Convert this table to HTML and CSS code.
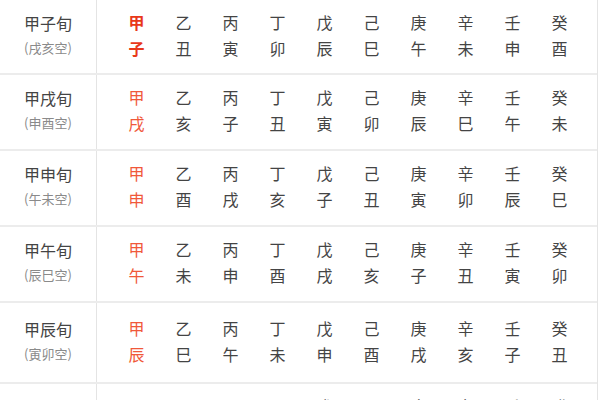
FILE: index.html
```html
<!DOCTYPE html>
<html lang="zh">
<head>
<meta charset="utf-8">
<link rel="stylesheet" href="styles.css">
</head>
<body>
<div class="table">
  <div class="row r1">
    <div class="label"><div class="name">甲子旬</div><div class="kong">(戌亥空)</div></div>
    <div class="cells">
      <div class="col first strong"><span>甲</span><span>子</span></div>
      <div class="col"><span>乙</span><span>丑</span></div>
      <div class="col"><span>丙</span><span>寅</span></div>
      <div class="col"><span>丁</span><span>卯</span></div>
      <div class="col"><span>戊</span><span>辰</span></div>
      <div class="col"><span>己</span><span>巳</span></div>
      <div class="col"><span>庚</span><span>午</span></div>
      <div class="col"><span>辛</span><span>未</span></div>
      <div class="col"><span>壬</span><span>申</span></div>
      <div class="col"><span>癸</span><span>酉</span></div>
    </div>
  </div>
  <div class="row">
    <div class="label"><div class="name">甲戌旬</div><div class="kong">(申酉空)</div></div>
    <div class="cells">
      <div class="col first"><span>甲</span><span>戌</span></div>
      <div class="col"><span>乙</span><span>亥</span></div>
      <div class="col"><span>丙</span><span>子</span></div>
      <div class="col"><span>丁</span><span>丑</span></div>
      <div class="col"><span>戊</span><span>寅</span></div>
      <div class="col"><span>己</span><span>卯</span></div>
      <div class="col"><span>庚</span><span>辰</span></div>
      <div class="col"><span>辛</span><span>巳</span></div>
      <div class="col"><span>壬</span><span>午</span></div>
      <div class="col"><span>癸</span><span>未</span></div>
    </div>
  </div>
  <div class="row">
    <div class="label"><div class="name">甲申旬</div><div class="kong">(午未空)</div></div>
    <div class="cells">
      <div class="col first"><span>甲</span><span>申</span></div>
      <div class="col"><span>乙</span><span>酉</span></div>
      <div class="col"><span>丙</span><span>戌</span></div>
      <div class="col"><span>丁</span><span>亥</span></div>
      <div class="col"><span>戊</span><span>子</span></div>
      <div class="col"><span>己</span><span>丑</span></div>
      <div class="col"><span>庚</span><span>寅</span></div>
      <div class="col"><span>辛</span><span>卯</span></div>
      <div class="col"><span>壬</span><span>辰</span></div>
      <div class="col"><span>癸</span><span>巳</span></div>
    </div>
  </div>
  <div class="row">
    <div class="label"><div class="name">甲午旬</div><div class="kong">(辰巳空)</div></div>
    <div class="cells">
      <div class="col first"><span>甲</span><span>午</span></div>
      <div class="col"><span>乙</span><span>未</span></div>
      <div class="col"><span>丙</span><span>申</span></div>
      <div class="col"><span>丁</span><span>酉</span></div>
      <div class="col"><span>戊</span><span>戌</span></div>
      <div class="col"><span>己</span><span>亥</span></div>
      <div class="col"><span>庚</span><span>子</span></div>
      <div class="col"><span>辛</span><span>丑</span></div>
      <div class="col"><span>壬</span><span>寅</span></div>
      <div class="col"><span>癸</span><span>卯</span></div>
    </div>
  </div>
  <div class="row r5">
    <div class="label"><div class="name">甲辰旬</div><div class="kong">(寅卯空)</div></div>
    <div class="cells">
      <div class="col first"><span>甲</span><span>辰</span></div>
      <div class="col"><span>乙</span><span>巳</span></div>
      <div class="col"><span>丙</span><span>午</span></div>
      <div class="col"><span>丁</span><span>未</span></div>
      <div class="col"><span>戊</span><span>申</span></div>
      <div class="col"><span>己</span><span>酉</span></div>
      <div class="col"><span>庚</span><span>戌</span></div>
      <div class="col"><span>辛</span><span>亥</span></div>
      <div class="col"><span>壬</span><span>子</span></div>
      <div class="col"><span>癸</span><span>丑</span></div>
    </div>
  </div>
  <div class="row">
    <div class="label"><div class="name">甲寅旬</div><div class="kong">(子丑空)</div></div>
    <div class="cells">
      <div class="col first"><span>甲</span><span>寅</span></div>
      <div class="col"><span>乙</span><span>卯</span></div>
      <div class="col"><span>丙</span><span>辰</span></div>
      <div class="col"><span>丁</span><span>巳</span></div>
      <div class="col"><span>戊</span><span>午</span></div>
      <div class="col"><span>己</span><span>未</span></div>
      <div class="col"><span>庚</span><span>申</span></div>
      <div class="col"><span>辛</span><span>酉</span></div>
      <div class="col"><span>壬</span><span>戌</span></div>
      <div class="col"><span>癸</span><span>亥</span></div>
    </div>
  </div>
</div>
</body>
</html>
```

FILE: styles.css
```css
html, body {
  margin: 0;
  padding: 0;
  background: #ffffff;
}
body {
  font-family: "Noto Sans CJK SC", "Noto Sans", sans-serif;
  color: #444444;
  overflow: hidden;
}
.table {
  width: 597px;
  border-right: 1px solid #e4e4e4;
}
.row {
  display: grid;
  grid-template-columns: 97px 1fr;
  height: 74px;
  border-bottom: 2px solid #ececec;
}
.row.r1 {
  height: 73px;
}
.row.r5 {
  height: 79px;
}
.label {
  border-right: 1px solid #e4e4e4;
  display: flex;
  flex-direction: column;
  align-items: center;
  justify-content: center;
  padding-bottom: 4px;
}
.name {
  font-size: 16px;
  line-height: 26px;
  color: #444444;
}
.kong {
  font-size: 13px;
  line-height: 24px;
  color: #8a8a8a;
}
.cells {
  display: grid;
  grid-template-columns: repeat(10, 47px);
  padding-left: 16px;
  align-content: center;
  padding-bottom: 4px;
}
.col {
  display: flex;
  flex-direction: column;
  align-items: center;
  font-size: 16px;
  line-height: 26px;
  color: #444444;
}
.col.first {
  color: #f0583a;
}
.col.first.strong {
  color: #e8381a;
  font-weight: 700;
}
```
